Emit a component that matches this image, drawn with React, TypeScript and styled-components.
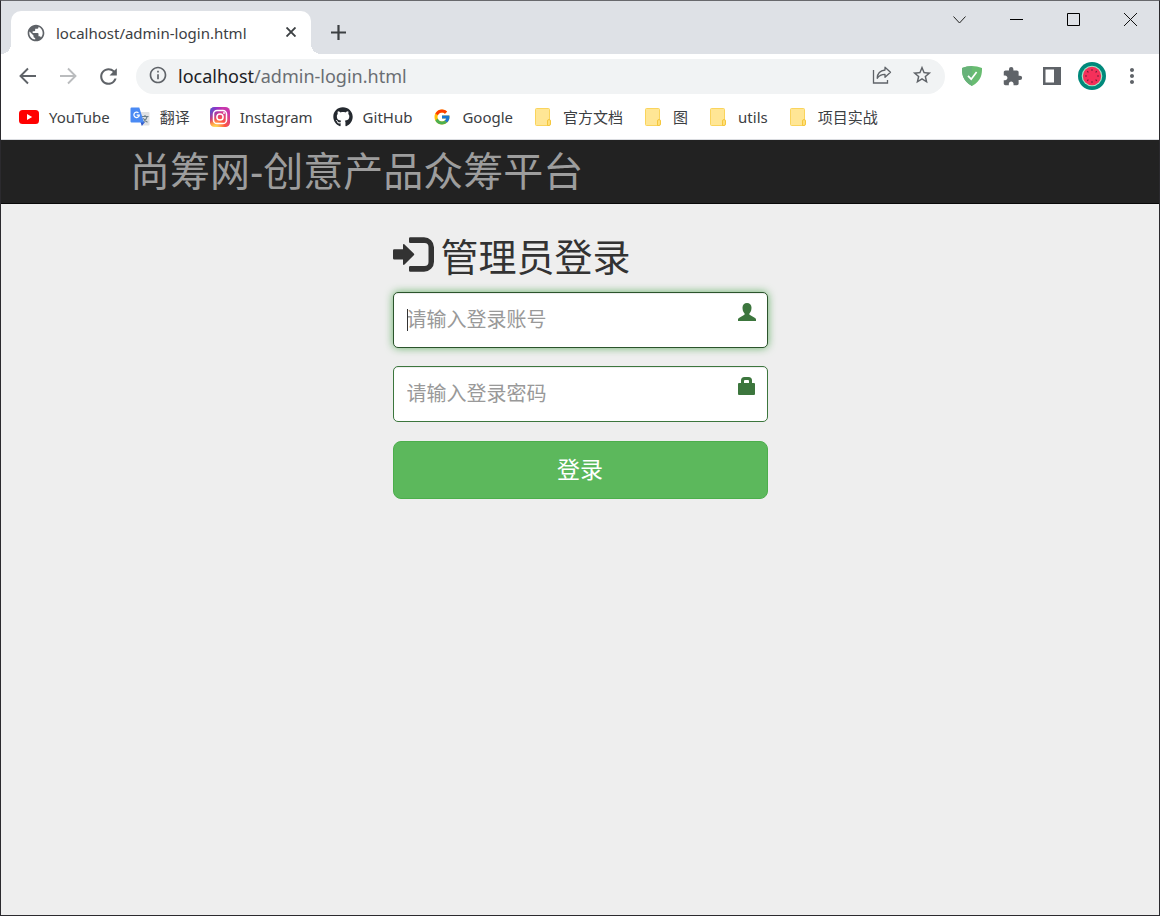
import React from "react";
import styled, { createGlobalStyle } from "styled-components";
import {
  MdExtension,
  MdInfoOutline,
  MdMoreVert,
  MdPublic,
  MdRefresh,
  MdStarBorder,
} from "react-icons/md";
import { FaGithub } from "react-icons/fa";
import { FcGoogle } from "react-icons/fc";

const uiFont = `"Noto Sans", "Open Sans", "Noto Sans CJK SC", sans-serif`;
const pageFont = `"Liberation Sans", "Noto Sans CJK SC", sans-serif`;

const GlobalStyle = createGlobalStyle`
  *, *::before, *::after { box-sizing: border-box; }
  body { margin: 0; background: #eee; }
  button, input { font: inherit; }
  svg { display: block; flex: none; }
`;

/* ---------- browser frame ---------- */

const Window = styled.div`
  display: flex;
  flex-direction: column;
  min-height: 100vh;
  border: 1px solid #2b2a2e;
  border-top-color: #68696d;
  font-family: ${uiFont};
  color: #3c4043;
`;

const TabStrip = styled.div`
  display: flex;
  align-items: flex-end;
  height: 53px;
  padding-left: 10px;
  background: #dee1e6;
`;

const Tab = styled.div`
  position: relative;
  display: flex;
  align-items: center;
  width: 300px;
  height: 43px;
  padding: 0 10px 0 15px;
  gap: 10px;
  border-radius: 10px 10px 0 0;
  background: #fff;
  font-size: 15px;
  color: #3c4043;

  &::before,
  &::after {
    content: "";
    position: absolute;
    bottom: 0;
    width: 10px;
    height: 10px;
  }
  &::before {
    right: 100%;
    background: radial-gradient(circle at 0 0, #dee1e6 10px, #fff 10px);
  }
  &::after {
    left: 100%;
    background: radial-gradient(circle at 100% 0, #dee1e6 10px, #fff 10px);
  }
`;

const TabTitle = styled.span`
  flex: 1;
  white-space: nowrap;
`;

const IconButton = styled.button<{ $size?: number; $color?: string }>`
  display: flex;
  align-items: center;
  justify-content: center;
  flex: none;
  width: ${(p) => p.$size ?? 40}px;
  height: ${(p) => p.$size ?? 40}px;
  padding: 0 0 1px;
  border: 0;
  background: none;
  color: ${(p) => p.$color ?? "#5f6368"};
`;

const NewTab = styled(IconButton)`
  height: 43px;
  margin-left: 7px;
  color: #3c4043;
`;

const WindowControls = styled.div`
  display: flex;
  align-self: flex-start;
  margin-left: auto;
`;

const WindowButton = styled.button`
  display: flex;
  align-items: center;
  justify-content: center;
  width: 57px;
  height: 37px;
  padding: 0;
  border: 0;
  background: none;
`;

const Toolbar = styled.div`
  display: flex;
  align-items: center;
  height: 45px;
  padding: 0 7px;
  background: #fff;
`;

const AddressBar = styled.div`
  display: flex;
  align-items: center;
  flex: 1;
  height: 35px;
  margin: 0 7px 0 8px;
  padding: 0 3px 2px 2px;
  border-radius: 18px;
  background: #f1f3f4;
  font-size: 18px;
`;

const AddressHost = styled.label`
  color: #202124;
`;

const AddressPath = styled.input`
  flex: 1;
  min-width: 0;
  padding: 0;
  border: 0;
  outline: 0;
  background: none;
  color: #6a6e73;
`;

const Bookmarks = styled.nav`
  display: flex;
  align-items: center;
  gap: 20px;
  height: 41px;
  padding: 0 18px 5px;
  border-bottom: 1px solid #dadce0;
  background: #fff;
  font-size: 15px;
`;

const Bookmark = styled.a`
  display: flex;
  align-items: center;
  gap: 10px;
  color: #3c4043;
  text-decoration: none;
  white-space: nowrap;
`;

const BookmarkIcon = styled.span`
  display: flex;
  justify-content: center;
  width: 20px;
`;

/* ---------- login page ---------- */

const Page = styled.div`
  flex: 1;
  background: #eee;
  font-family: ${pageFont};
`;

const Navbar = styled.header`
  height: 64px;
  border-bottom: 1px solid #080808;
  background: #222;
`;

const Container = styled.div`
  max-width: 938px;
  margin: 0 auto;
  padding: 0 19px;
`;

const Brand = styled.a`
  font-size: 40px;
  line-height: 64px;
  color: #9d9d9d;
  text-decoration: none;
`;

const LoginForm = styled.form`
  max-width: 375px;
  margin: 0 auto;
  padding-top: 33px;
`;

const Heading = styled.h2`
  display: flex;
  align-items: flex-start;
  gap: 6px;
  margin: 0 0 13px;
  font-size: 38px;
  font-weight: 400;
  line-height: 42px;
  color: #333;
`;

const Field = styled.label`
  position: relative;
  display: block;
  margin-bottom: 18px;
`;

const TextInput = styled.input<{ $active?: boolean }>`
  display: block;
  width: 100%;
  height: 56px;
  padding: 0 52px 0 13px;
  border: 1px solid ${(p) => (p.$active ? "#2b542c" : "#3c763d")};
  border-radius: 5px;
  outline: 0;
  background: #fff;
  box-shadow: inset 0 1px 1px rgba(0, 0, 0, 0.075)
    ${(p) => (p.$active ? ", 0 0 8px #67b168" : "")};
  font-size: 20px;
  caret-color: transparent;

  &::placeholder {
    color: #999;
    opacity: 1;
  }
`;

const Caret = styled.span`
  position: absolute;
  top: 17px;
  left: 14px;
  width: 1px;
  height: 22px;
  background: #333;
`;

const FieldIcon = styled.svg`
  position: absolute;
  top: 11px;
  right: 12px;
  fill: #3c763d;
`;

const SubmitButton = styled.button`
  display: block;
  width: 100%;
  height: 58px;
  margin-top: 19px;
  padding: 0 0 5px;
  border: 1px solid #4cae4c;
  border-radius: 8px;
  background: #5cb85c;
  color: #fff;
  font-size: 23px;
`;

/* ---------- drawings ---------- */

const ArrowIcon = ({ flip }: { flip?: boolean }) => (
  <svg width="18" height="18" viewBox="0 0 18 18" fill="none" stroke="currentColor" strokeWidth="1.900">
    <path d={flip ? "M1 9h15M9 1.500L16.500 9 9 16.500" : "M17 9H2M9 1.500L1.500 9 9 16.500"} />
  </svg>
);

const YouTubeIcon = () => (
  <svg width="20" height="20" viewBox="0 0 20 20">
    <rect y="3" width="20" height="14" rx="3.5" fill="#f00" />
    <path d="M8 7l5.2 3L8 13z" fill="#fff" />
  </svg>
);

const TranslateIcon = () => (
  <svg width="20" height="20" viewBox="0 0 20 20">
    <path d="M8 5h10.500a1 1 0 0 1 1 1v11.500a1 1 0 0 1-1 1H12z" fill="#dfe1e4" />
    <path d="M11.500 9.500h7M15 8v1.500M17.200 9.500c-.6 2.400-2.300 4.400-4.200 5.500M13.300 11.200c.8 1.700 2.300 3.200 4.200 4" fill="none" stroke="#6b7f8a" strokeWidth="1.100" />
    <path d="M10.500 15h4.500l-3.200 4z" fill="#3059c9" />
    <path d="M1.500.5h7.800l4.700 15H1.500a1 1 0 0 1-1-1v-13a1 1 0 0 1 1-1z" fill="#4a8af4" />
    <path d="M8.500 5.900a2.700 2.700 0 1 0 .8 2.200H6.700" fill="none" stroke="#fff" strokeWidth="1.200" />
  </svg>
);

const InstagramIcon = () => (
  <svg width="20" height="20" viewBox="0 0 20 20">
    <defs>
      <radialGradient id="igWarm" cx="0.27" cy="1.08" r="1">
        <stop offset="0" stopColor="#fd5" />
        <stop offset="0.1" stopColor="#fd5" />
        <stop offset="0.5" stopColor="#ff543e" />
        <stop offset="1" stopColor="#c837ab" />
      </radialGradient>
      <radialGradient id="igCool" cx="-0.17" cy="0.07" r="0.8">
        <stop offset="0" stopColor="#3771c8" />
        <stop offset="0.13" stopColor="#3771c8" />
        <stop offset="1" stopColor="#60f" stopOpacity="0" />
      </radialGradient>
    </defs>
    <rect width="20" height="20" rx="4.600" fill="url(#igWarm)" />
    <rect width="20" height="20" rx="4.600" fill="url(#igCool)" />
    <rect x="3.500" y="3.500" width="13" height="13" rx="3.600" fill="none" stroke="#fff" strokeWidth="1.500" />
    <circle cx="10" cy="10" r="3.100" fill="none" stroke="#fff" strokeWidth="1.500" />
    <circle cx="14" cy="6" r="0.900" fill="#fff" />
  </svg>
);

const FolderIcon = () => (
  <svg width="20" height="20" viewBox="0 0 20 20">
    <rect x="2.500" y="1.500" width="14" height="17" rx="1" fill="#ffe695" stroke="#fad45c" />
    <path d="M14.500 18.500v-4.500a1.500 1.500 0 0 1 3 0v3a1.500 1.500 0 0 1-1.500 1.500z" fill="#ffe07a" stroke="#f5c73d" />
  </svg>
);

const ShareIcon = () => (
  <svg width="20" height="20" viewBox="0 0 20 20" fill="none" stroke="#5f6368" strokeWidth="1.300">
    <path d="M1.500 5v13h14v-3" />
    <path d="M13 2.200l5.500 5-5.500 5V9.300c-3.500 0-6 1.200-7.800 4C5.400 8.800 8.300 5.500 13 5z" strokeLinejoin="round" />
  </svg>
);

const ShieldIcon = () => (
  <svg width="20" height="20" viewBox="0 0 20 20">
    <path d="M10 0c3 0 7 .7 10 2.100 0 4.400.2 12.300-10 17.900C-.2 14.400 0 6.500 0 2.100 3 .7 7 0 10 0z" fill="#68bc71" />
    <path d="M10 0v20C-.2 14.400 0 6.500 0 2.100 3 .7 7 0 10 0z" fill="#67b279" />
    <path d="M6 9.800l3.200 3.400 5.400-7.200" fill="none" stroke="#fff" strokeWidth="1.700" />
  </svg>
);

const SidePanelIcon = () => (
  <svg width="18" height="18" viewBox="0 0 18 18">
    <path d="M0 0h18v18H0zM2.500 2.500v13H11v-13z" fill="#5f6368" fillRule="evenodd" />
  </svg>
);

const seeds = [0, 45, 90, 135, 180, 225, 270, 315];

const WatermelonIcon = () => (
  <svg width="28" height="28" viewBox="0 0 28 28">
    <circle cx="14" cy="14" r="14" fill="#00897b" />
    <circle cx="14" cy="14" r="10.300" fill="#a5e8c8" />
    <circle cx="14" cy="14" r="9.200" fill="#f5305a" />
    {seeds.map((angle) => (
      <ellipse key={angle} cx="14" cy="8" rx="0.700" ry="1" fill="#7c1f3c" transform={`rotate(${angle} 14 14)`} />
    ))}
  </svg>
);

const LoginIcon = () => (
  <svg width="42" height="36" viewBox="0 0 42 36" fill="#333">
    <path d="M1.200 12.200H10V8c0-1 .8-1.300 1.500-.6l9.300 9.200a1.200 1.200 0 0 1 0 1.700l-9.300 9.300c-.7.700-1.500.4-1.500-.6v-4.500H1.200A1.200 1.200 0 0 1 0 21.300v-7.900a1.200 1.200 0 0 1 1.200-1.200z" />
    <path d="M17.200.3H31A10 10 0 0 1 41 10.300v14.400a10 10 0 0 1-10 10H17.200A1.200 1.200 0 0 1 16 33.500v-3.300a1.200 1.200 0 0 1 1.200-1.200H31.500a4 4 0 0 0 4-4V10a4 4 0 0 0-4-4H17.200A1.200 1.200 0 0 1 16 4.800V1.500A1.200 1.200 0 0 1 17.200.3z" />
  </svg>
);

const bookmarks: { label: string; icon: React.ReactNode }[] = [
  { label: "YouTube", icon: <YouTubeIcon /> },
  { label: "翻译", icon: <TranslateIcon /> },
  { label: "Instagram", icon: <InstagramIcon /> },
  { label: "GitHub", icon: <FaGithub size={20} color="#24292f" /> },
  { label: "Google", icon: <FcGoogle size={18} /> },
  { label: "官方文档", icon: <FolderIcon /> },
  { label: "图", icon: <FolderIcon /> },
  { label: "utils", icon: <FolderIcon /> },
  { label: "项目实战", icon: <FolderIcon /> },
];

export default function App() {
  return (
    <Window>
      <GlobalStyle />
      <TabStrip>
        <Tab>
          <MdPublic size={20} color="#5f6368" />
          <TabTitle>localhost/admin-login.html</TabTitle>
          <IconButton $size={20} $color="#3c4043" aria-label="Close tab">
            <svg width="10" height="10" viewBox="0 0 10 10" stroke="currentColor" strokeWidth="1.900">
              <path d="M.5.5l9 9M9.500.5l-9 9" />
            </svg>
          </IconButton>
        </Tab>
        <NewTab aria-label="New tab">
          <svg width="15" height="15" viewBox="0 0 15 15" stroke="currentColor" strokeWidth="2.200">
            <path d="M7.500 0v15M0 7.500h15" />
          </svg>
        </NewTab>
        <WindowControls>
          <WindowButton aria-label="Search tabs">
            <svg width="13" height="8" viewBox="0 0 13 8" fill="none" stroke="#222">
              <path d="M.5.5l6 6.500 6-6.500" />
            </svg>
          </WindowButton>
          <WindowButton aria-label="Minimize">
            <svg width="13" height="1" viewBox="0 0 13 1">
              <path d="M0 0h13v1H0z" />
            </svg>
          </WindowButton>
          <WindowButton aria-label="Maximize">
            <svg width="13" height="13" viewBox="0 0 13 13" fill="none" stroke="#000">
              <path d="M.5.5h12v12H.5z" />
            </svg>
          </WindowButton>
          <WindowButton aria-label="Close">
            <svg width="13" height="13" viewBox="0 0 13 13" fill="none" stroke="#111">
              <path d="M0 0l13 13M13 0L0 13" />
            </svg>
          </WindowButton>
        </WindowControls>
      </TabStrip>

      <Toolbar>
        <IconButton aria-label="Back">
          <ArrowIcon />
        </IconButton>
        <IconButton $color="#babcbe" aria-label="Forward">
          <ArrowIcon flip />
        </IconButton>
        <IconButton aria-label="Reload">
          <MdRefresh size={25} />
        </IconButton>
        <AddressBar>
          <IconButton aria-label="Site information">
            <MdInfoOutline size={20} />
          </IconButton>
          <AddressHost htmlFor="address">localhost</AddressHost>
          <AddressPath id="address" defaultValue="/admin-login.html" />
          <IconButton aria-label="Share">
            <ShareIcon />
          </IconButton>
          <IconButton aria-label="Bookmark this page">
            <MdStarBorder size={22} />
          </IconButton>
        </AddressBar>
        <IconButton aria-label="Ad blocker">
          <ShieldIcon />
        </IconButton>
        <IconButton aria-label="Extensions">
          <MdExtension size={21} />
        </IconButton>
        <IconButton aria-label="Side panel">
          <SidePanelIcon />
        </IconButton>
        <IconButton aria-label="Profile">
          <WatermelonIcon />
        </IconButton>
        <IconButton aria-label="Menu">
          <MdMoreVert size={24} />
        </IconButton>
      </Toolbar>

      <Bookmarks>
        {bookmarks.map((b) => (
          <Bookmark key={b.label} href="#">
            <BookmarkIcon>{b.icon}</BookmarkIcon>
            <span>{b.label}</span>
          </Bookmark>
        ))}
      </Bookmarks>

      <Page>
        <Navbar>
          <Container>
            <Brand href="#">尚筹网-创意产品众筹平台</Brand>
          </Container>
        </Navbar>
        <Container as="main">
          <LoginForm onSubmit={(e) => e.preventDefault()}>
            <Heading>
              <LoginIcon />
              管理员登录
            </Heading>
            <Field>
              <TextInput $active type="text" placeholder="请输入登录账号" aria-label="登录账号" />
              <Caret />
              <FieldIcon width="18" height="18" viewBox="0 0 18 18">
                <path d="M9 0c2.600 0 4.500 1.700 4.500 4.600 0 2.200-.5 4.300-1.900 5.600-.5.500-.3 1.500.4 1.900l4.700 2.700c.9.500 1.300 1 1.300 1.800V18H0v-1.400c0-.8.400-1.300 1.300-1.800L6 12.100c.7-.4.900-1.400.4-1.900C5 8.900 4.500 6.800 4.500 4.600 4.500 1.700 6.400 0 9 0z" />
              </FieldIcon>
            </Field>
            <Field>
              <TextInput type="password" placeholder="请输入登录密码" aria-label="登录密码" />
              <FieldIcon width="18" height="18" viewBox="0 0 18 18">
                <path fillRule="evenodd" d="M3 6V3.500A3.500 3.500 0 0 1 6.500 0h4A3.500 3.500 0 0 1 14 3.500V6h2a1 1 0 0 1 1 1v10a1 1 0 0 1-1 1H1a1 1 0 0 1-1-1V7a1 1 0 0 1 1-1zM6 6h5V4a1 1 0 0 0-1-1H7a1 1 0 0 0-1 1z" />
              </FieldIcon>
            </Field>
            <SubmitButton type="submit">登录</SubmitButton>
          </LoginForm>
        </Container>
      </Page>
    </Window>
  );
}
